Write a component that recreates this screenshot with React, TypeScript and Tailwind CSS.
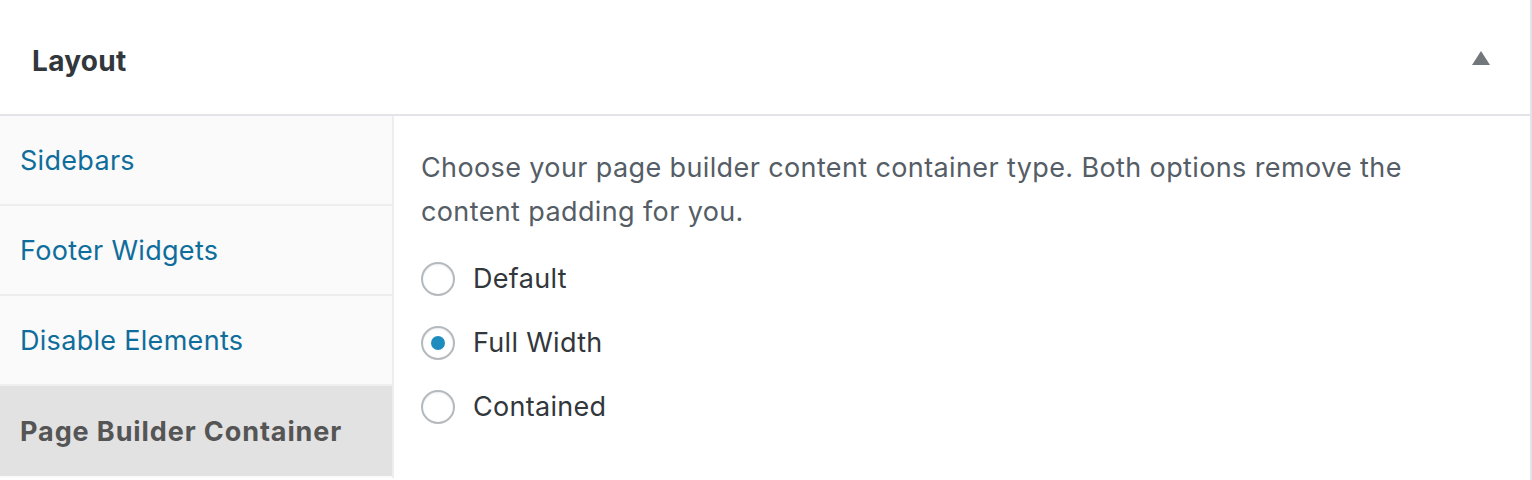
import { useState } from 'react';

const tabs = ['Sidebars', 'Footer Widgets', 'Disable Elements', 'Page Builder Container'];
const options = ['Default', 'Full Width', 'Contained'];

export default function App() {
  const [active] = useState(3);
  const [picked, setPicked] = useState(1);

  return (
    <main
      className="w-[1532px] h-[480px] bg-white overflow-hidden border-r-2 border-[#e2e4e7]"
      style={{ fontFamily: 'Inter, "Noto Sans", sans-serif' }}
    >
      <header className="flex items-center justify-between h-[116px] pl-[32px] pr-[40px] border-b-2 border-[#e2e4e7]">
        <h2 className="text-[28px] font-bold text-[#32373c] tracking-[0.3px] mt-[8px]">Layout</h2>
        <svg width="18" height="14" viewBox="0 0 18 14" className="mt-[2px]">
          <path d="M9 0 L18 14 L0 14 Z" fill="#72777c" />
        </svg>
      </header>
      <div className="flex">
        <nav className="w-[394px] h-[362px] bg-[#fafafa] border-r-2 border-[#eeeeee] flex flex-col">
          {tabs.map((t, i) => (
            <div
              key={t}
              className={
                i === active
                  ? 'h-[90px] flex items-center pl-[20px] pt-[3px] bg-[#e2e2e2] text-[#555555] font-bold text-[27px] tracking-[0.9px]'
                  : 'h-[90px] flex items-center pl-[20px] pt-[3px] border-b-2 border-[#eeeeee] text-[#0f6d9c] text-[27px] tracking-[0.3px]'
              }
            >
              {t}
            </div>
          ))}
        </nav>
        <section className="flex-1 pl-[27px] pt-[30px]">
          <p className="text-[27px] leading-[44px] text-[#555d66] tracking-[0.38px] max-w-[1020px]">
            Choose your page builder content container type. Both options remove the content padding for you.
          </p>
          <div className="flex flex-col gap-[30px] mt-[28px]">
            {options.map((o, i) => (
              <label key={o} className="flex items-center gap-[18px] h-[34px] cursor-pointer" onClick={() => setPicked(i)}>
                <span className="w-[34px] h-[34px] rounded-full border-2 border-[#b4b9be] bg-white flex items-center justify-center shadow-[inset_0_1px_2px_rgba(0,0,0,0.07)]">
                  {picked === i && <span className="w-[14px] h-[14px] rounded-full bg-[#1e8cbe]" />}
                </span>
                <span className="text-[27px] text-[#32373c] tracking-[0.3px]">{o}</span>
              </label>
            ))}
          </div>
        </section>
      </div>
    </main>
  );
}
